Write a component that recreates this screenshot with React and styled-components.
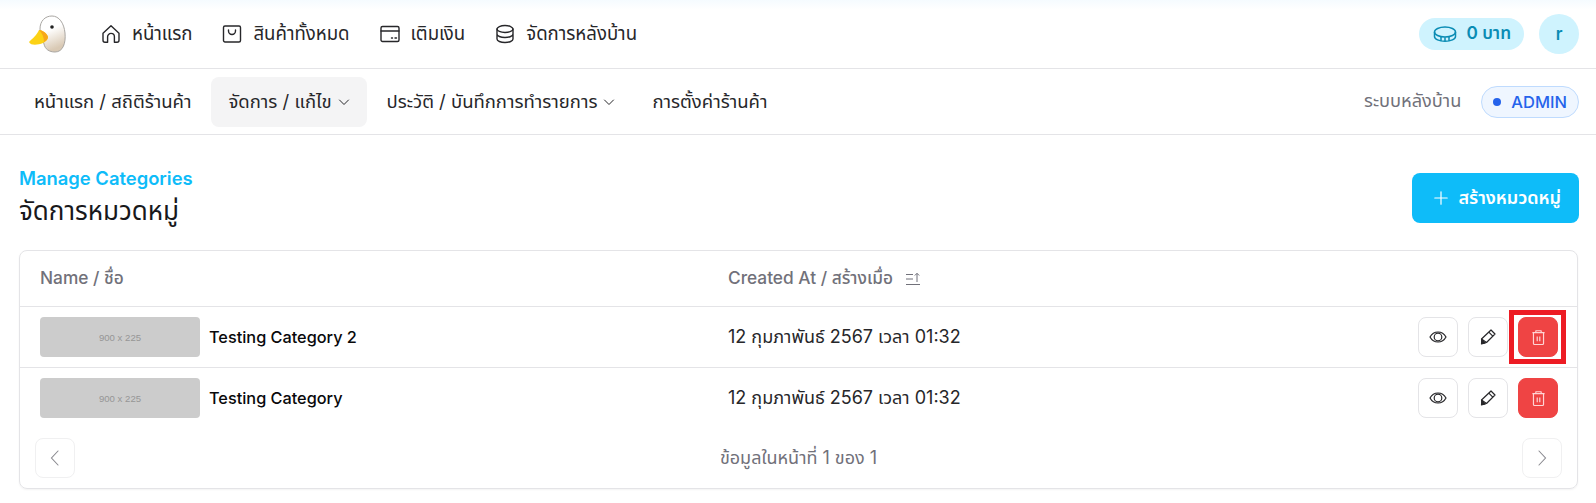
import React from "react";
import styled, { createGlobalStyle } from "styled-components";

const GlobalStyle = createGlobalStyle`
  * { box-sizing: border-box; }
  body {
    margin: 0;
    background: #fff;
    color: #18181b;
    font-family: "Inter", "Noto Sans", "Noto Sans Thai", sans-serif;
  }
`;

const HomeIcon = () => (
  <svg width="20" height="20" viewBox="0 0 20 20" fill="none" stroke="currentColor" strokeWidth="1.4" strokeLinejoin="round" strokeLinecap="round">
    <path d="M2 9.2 10 1.800l8 7.400v7a2 2 0 0 1-2 2h-2.600v-5.400a3.400 3.400 0 0 0-6.800 0v5.400H4a2 2 0 0 1-2-2z" />
  </svg>
);

const BagIcon = () => (
  <svg width="20" height="20" viewBox="0 0 20 20" fill="none" stroke="currentColor" strokeWidth="1.4" strokeLinejoin="round" strokeLinecap="round">
    <rect x="1.500" y="2" width="17" height="16" rx="1.500" />
    <path d="M6.500 6v1a3.500 3.500 0 0 0 7 0V6" />
  </svg>
);

const WalletIcon = () => (
  <svg width="20" height="20" viewBox="0 0 20 20" fill="none" stroke="currentColor" strokeWidth="1.4" strokeLinejoin="round" strokeLinecap="round">
    <rect x="1" y="2.500" width="18" height="15" rx="1.500" />
    <path d="M1 7h18M11.500 14h1M15 14h1.500" />
  </svg>
);

const DatabaseIcon = () => (
  <svg width="20" height="20" viewBox="0 0 20 20" fill="none" stroke="currentColor" strokeWidth="1.4" strokeLinejoin="round" strokeLinecap="round">
    <ellipse cx="10" cy="5" rx="8" ry="3.500" />
    <path d="M2 5v10c0 2 3.600 3.500 8 3.500s8-1.500 8-3.500V5M2 10c0 2 3.600 3.500 8 3.500s8-1.500 8-3.500" />
  </svg>
);

const CoinIcon = () => (
  <svg width="24" height="18" viewBox="0 0 24 18" fill="none" stroke="currentColor" strokeWidth="1.500" strokeLinejoin="round">
    <ellipse cx="12" cy="7" rx="10.500" ry="5" />
    <path d="M1.500 7v4.500c0 2.700 4.700 4.800 10.500 4.800s10.500-2.100 10.500-4.800V7M8 12v4M12 12.300v4M16 12v4" />
  </svg>
);

const Chevron = () => (
  <svg width="12" height="12" viewBox="0 0 12 12" fill="none" stroke="currentColor" strokeWidth="1" strokeLinecap="round">
    <path d="M1.500 4 6 8.500 10.500 4" />
  </svg>
);

const PlusIcon = () => (
  <svg width="14" height="14" viewBox="0 0 14 14" stroke="currentColor" strokeWidth="1.200" strokeLinecap="round">
    <path d="M7 .8v12.400M.8 7h12.400" />
  </svg>
);

const SortIcon = () => (
  <svg width="16" height="14" viewBox="0 0 16 14" fill="none" stroke="currentColor" strokeWidth="1">
    <path d="M1 2.500h7M1 7h7M1 12.500h14M12 10V1.500M9.800 3.500 12 1.300l2.200 2.200" />
  </svg>
);

const EyeIcon = () => (
  <svg width="18" height="18" viewBox="0 0 18 18" fill="none" stroke="currentColor" strokeWidth="1.200">
    <path d="M1 9c1.800-3.300 4.600-5 8-5s6.200 1.700 8 5c-1.800 3.300-4.600 5-8 5s-6.200-1.700-8-5z" />
    <circle cx="9" cy="9" r="3.800" />
  </svg>
);

const PencilIcon = () => (
  <svg width="16" height="16" viewBox="0 0 16 16" fill="none" stroke="currentColor" strokeWidth="1.200" strokeLinejoin="round">
    <path d="M11 1 15 5 6.500 13.500 2.500 14.500 1.500 10z" />
    <path d="M8.800 3.200l4 4M1.500 10l5 3.500" />
    <path d="M1.800 11 5 14 1.500 15z" fill="currentColor" />
  </svg>
);

const TrashIcon = () => (
  <svg width="13" height="15" viewBox="0 0 12 14" fill="none" stroke="#ffd5d5" strokeWidth="1.100" strokeLinejoin="round">
    <path d="M.3 2.500h11.400M3.500 2.500V.7h5v1.800M1.300 2.500v10a1 1 0 0 0 1 1h7.400a1 1 0 0 0 1-1v-10M4.800 6v4.500M7.200 6v4.500" />
  </svg>
);

const PagerLeft = () => (
  <svg width="10" height="16" viewBox="0 0 10 16" fill="none" stroke="currentColor" strokeWidth="1.100" strokeLinecap="round">
    <path d="M8 1 1.500 8 8 15" />
  </svg>
);

const PagerRight = () => (
  <svg width="10" height="16" viewBox="0 0 10 16" fill="none" stroke="currentColor" strokeWidth="1.100" strokeLinecap="round">
    <path d="M2 1l6.500 7L2 15" />
  </svg>
);

const DuckLogo = () => (
  <svg width="38" height="38" viewBox="0 0 38 38">
    <defs>
      <linearGradient id="duckHead" x1="0" y1="0" x2="0.3" y2="1">
        <stop offset="0.45" stopColor="#ffffff" />
        <stop offset="1" stopColor="#d9c9b4" />
      </linearGradient>
    </defs>
    <path d="M12 14C12 6 17 1 24 1c7 0 12 7 13 17 1 10-2 19-10 19-6 0-10-3-11-8-1-5-4-10-4-15z" fill="url(#duckHead)" stroke="#a9a6a2" strokeWidth="1" />
    <path d="M1 27c3-3 8-7 10-12 3 0 8 3 9 7 0 3-3 5-5 6-5 2-12 3-14-1z" fill="#fcd215" />
    <path d="M11 15c3 0 8 3 9 7 0 2-2 4-4 5 0-5-2-9-5-12z" fill="#f7a71b" />
    <circle cx="24" cy="12" r="1.800" fill="#222" />
  </svg>
);

const Page = styled.div`
  width: 1596px;
  height: 503px;
  overflow: hidden;
  background: #fff;
`;

const TopBar = styled.header`
  height: 69px;
  display: flex;
  align-items: center;
  justify-content: space-between;
  padding: 0 17px 0 28px;
  border-bottom: 1px solid #e4e4e7;
  background: linear-gradient(#f5fbff, #fff 10px);
`;

const BarGroup = styled.div`
  display: flex;
  align-items: center;
  gap: ${(p) => p.$gap || 0}px;
`;

const MainNav = styled.nav`
  display: flex;
  align-items: center;
  gap: 30px;
  margin-left: 35px;
`;

const MainLink = styled.a`
  display: flex;
  align-items: center;
  gap: 11px;
  font-size: 18.6px;
  font-weight: 400;
  color: #27272a;
`;

const CoinPill = styled.div`
  display: flex;
  align-items: center;
  gap: 9px;
  height: 32px;
  padding: 0 13px 0 14px;
  border-radius: 16px;
  background: #cff3fe;
  color: #0a8cb4;
  font-size: 17.2px;
  font-weight: 600;
`;

const Avatar = styled.div`
  width: 40px;
  height: 40px;
  border-radius: 50%;
  display: flex;
  align-items: center;
  justify-content: center;
  background: #cff3fe;
  color: #0a8cb4;
  font-size: 17px;
  font-weight: 600;
`;

const SubBar = styled.div`
  height: 66px;
  display: flex;
  align-items: center;
  justify-content: space-between;
  padding: 0 17px;
  border-bottom: 1px solid #e4e4e7;
`;

const SubNav = styled.nav`
  display: flex;
  align-items: center;
  gap: 3px;
`;

const SubLink = styled.a`
  display: flex;
  align-items: center;
  gap: 6px;
  height: 50px;
  padding: 0 17px;
  border-radius: 8px;
  font-size: 18.5px;
  font-weight: 400;
  color: #27272a;
  background: ${(p) => (p.$active ? "#f4f4f5" : "transparent")};
`;

const SystemLabel = styled.span`
  font-size: 18.2px;
  color: #71717a;
`;

const RoleBadge = styled.div`
  display: flex;
  align-items: center;
  gap: 10px;
  height: 32px;
  padding: 0 11px;
  border: 1px solid #bfdbfe;
  border-radius: 16px;
  background: #eff6ff;
  color: #2563eb;
  font-size: 16.5px;
  font-weight: 500;

  &::before {
    content: "";
    width: 8px;
    height: 8px;
    border-radius: 50%;
    background: #2563eb;
  }
`;

const Content = styled.main`
  padding: 0 17px 0 19px;
`;

const TitleRow = styled.div`
  height: 115px;
  display: flex;
  align-items: flex-start;
  justify-content: space-between;
`;

const TitleBlock = styled.div`
  padding-top: 31px;
`;

const Eyebrow = styled.div`
  font-size: 18.4px;
  line-height: 24px;
  font-weight: 600;
  color: #0ebcf9;
`;

const Title = styled.h1`
  margin: 4px 0 0;
  font-size: 26px;
  line-height: 34px;
  font-weight: 400;
  color: #18181b;
`;

const PrimaryButton = styled.button`
  display: flex;
  align-items: center;
  gap: 10px;
  height: 50px;
  margin-top: 38px;
  padding: 0 18px 0 22px;
  border: none;
  border-radius: 8px;
  background: #0ebcf9;
  color: #fff;
  font: inherit;
  font-size: 18px;
  font-weight: 600;
`;

const Card = styled.section`
  width: 1559px;
  height: 239px;
  border: 1px solid #e4e4e7;
  border-radius: 8px;
  box-shadow: 0 1px 2px rgba(0, 0, 0, 0.05);
`;

const TableHead = styled.div`
  display: grid;
  grid-template-columns: 688px 1fr;
  align-items: center;
  height: 56px;
  padding: 0 20px;
  border-bottom: 1px solid #e4e4e7;
  font-size: 17.3px;
  font-weight: 500;
  color: #71717a;
`;

const HeadCell = styled.div`
  display: flex;
  align-items: center;
  gap: 12px;
`;

const TableRow = styled.div`
  display: grid;
  grid-template-columns: 688px 1fr auto;
  align-items: center;
  padding: 10px 19px 10px 20px;
  border-bottom: ${(p) => (p.$last ? "none" : "1px solid #e4e4e7")};
`;

const NameCell = styled.div`
  display: flex;
  align-items: center;
  gap: 9px;
  font-size: 16.3px;
  font-weight: 500;
  color: #09090b;
`;

const Thumb = styled.div`
  width: 160px;
  height: 40px;
  display: flex;
  align-items: center;
  justify-content: center;
  border-radius: 4px;
  background: #cccccc;
  color: #969696;
  font-family: "Liberation Sans", sans-serif;
  font-size: 9.6px;
`;

const DateCell = styled.div`
  font-size: 18px;
  color: #27272a;
`;

const Actions = styled.div`
  display: flex;
  gap: 10px;
`;

const IconButton = styled.button`
  position: relative;
  width: 40px;
  height: 40px;
  padding: 0;
  display: flex;
  align-items: center;
  justify-content: center;
  border: 1px solid ${(p) => (p.$danger ? "#ef4444" : "#e4e4e7")};
  border-radius: 8px;
  background: ${(p) => (p.$danger ? "#ef4444" : "#fff")};
  color: ${(p) => (p.$danger ? "#ffffff" : "#27272a")};
`;

const Highlight = styled.span`
  position: absolute;
  top: -8px;
  left: -10px;
  width: 57px;
  height: 54px;
  border: 5px solid #ed1c24;
  pointer-events: none;
`;

const Pager = styled.div`
  display: flex;
  align-items: center;
  justify-content: space-between;
  padding: 0 15px;
  margin-top: 10px;
  font-size: 18px;
  color: #71717a;
`;

const PagerButton = styled.button`
  width: 40px;
  height: 40px;
  padding: 0;
  display: flex;
  align-items: center;
  justify-content: center;
  border: 1px solid #f0f0f1;
  border-radius: 8px;
  background: #fff;
  color: #8a8a90;
`;

const rows = [
  { name: "Testing Category 2", date: "12 กุมภาพันธ์ 2567 เวลา 01:32", marked: true },
  { name: "Testing Category", date: "12 กุมภาพันธ์ 2567 เวลา 01:32", marked: false },
];

export default function App() {
  return (
    <Page>
      <GlobalStyle />
      <TopBar>
        <BarGroup>
          <DuckLogo />
          <MainNav>
            <MainLink><HomeIcon />หน้าแรก</MainLink>
            <MainLink><BagIcon />สินค้าทั้งหมด</MainLink>
            <MainLink><WalletIcon />เติมเงิน</MainLink>
            <MainLink><DatabaseIcon />จัดการหลังบ้าน</MainLink>
          </MainNav>
        </BarGroup>
        <BarGroup $gap={15}>
          <CoinPill><CoinIcon />0 บาท</CoinPill>
          <Avatar>r</Avatar>
        </BarGroup>
      </TopBar>

      <SubBar>
        <SubNav>
          <SubLink>หน้าแรก / สถิติร้านค้า</SubLink>
          <SubLink $active>จัดการ / แก้ไข <Chevron /></SubLink>
          <SubLink>ประวัติ / บันทึกการทำรายการ <Chevron /></SubLink>
          <SubLink>การตั้งค่าร้านค้า</SubLink>
        </SubNav>
        <BarGroup $gap={20}>
          <SystemLabel>ระบบหลังบ้าน</SystemLabel>
          <RoleBadge>ADMIN</RoleBadge>
        </BarGroup>
      </SubBar>

      <Content>
        <TitleRow>
          <TitleBlock>
            <Eyebrow>Manage Categories</Eyebrow>
            <Title>จัดการหมวดหมู่</Title>
          </TitleBlock>
          <PrimaryButton><PlusIcon />สร้างหมวดหมู่</PrimaryButton>
        </TitleRow>

        <Card>
          <TableHead>
            <HeadCell>Name / ชื่อ</HeadCell>
            <HeadCell>Created At / สร้างเมื่อ <SortIcon /></HeadCell>
          </TableHead>
          {rows.map((row, i) => (
            <TableRow key={row.name} $last={i === rows.length - 1}>
              <NameCell>
                <Thumb>900 x 225</Thumb>
                {row.name}
              </NameCell>
              <DateCell>{row.date}</DateCell>
              <Actions>
                <IconButton><EyeIcon /></IconButton>
                <IconButton><PencilIcon /></IconButton>
                <IconButton $danger>
                  <TrashIcon />
                  {row.marked && <Highlight />}
                </IconButton>
              </Actions>
            </TableRow>
          ))}
          <Pager>
            <PagerButton><PagerLeft /></PagerButton>
            <span>ข้อมูลในหน้าที่ 1 ของ 1</span>
            <PagerButton><PagerRight /></PagerButton>
          </Pager>
        </Card>
      </Content>
    </Page>
  );
}
